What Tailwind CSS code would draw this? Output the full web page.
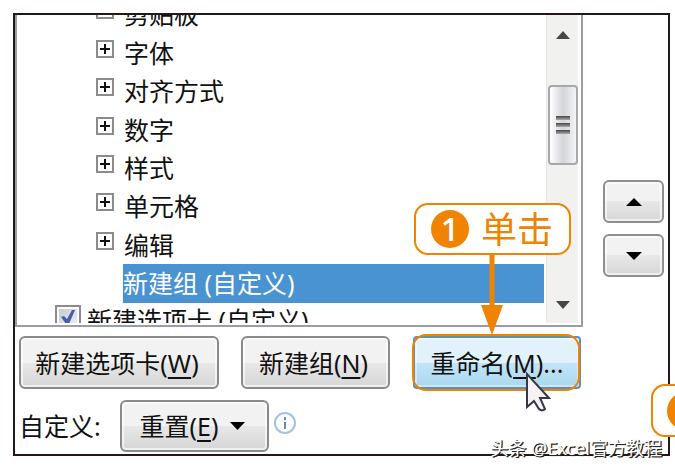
<!DOCTYPE html>
<html lang="zh-CN">
<head>
  <meta charset="UTF-8">
  <title>自定义功能区</title>
  <script src="https://cdn.jsdelivr.net/npm/@tailwindcss/browser@4"></script>
</head>
<body class="relative min-h-screen overflow-hidden bg-white pt-[13px] pl-[13px] pr-[5px] font-['Noto_Sans','Noto_Sans_CJK_SC',sans-serif] text-[25px] leading-8 text-[#111]">

  <main class="border-2 border-[#231815] pb-0.5">

    <div class="flex">
      <!-- Tree list -->
      <div class="flex h-[312px] flex-1 overflow-hidden border-r-2 border-b-2 border-l-2 border-[#9a9ca6]">
        <div class="mb-0.5 flex-1 overflow-hidden">
          <ul class="-mt-5 flex h-[346px] flex-col">
            <li class="flex flex-1 items-center pl-[79px]">
              <button aria-label="展开剪贴板" class="mr-[10px] mb-2 flex size-[18px] items-center justify-center border-2 border-[#8c8c8c]">
                <svg class="size-[10px]" viewBox="0 0 10 10"><path d="M0 5h10M5 0v10" stroke="#111" stroke-width="2"/></svg>
              </button>
              <span>剪贴板</span>
            </li>
            <li class="flex flex-1 items-center pl-[79px]">
              <button aria-label="展开字体" class="mr-[10px] mb-2 flex size-[18px] items-center justify-center border-2 border-[#8c8c8c]">
                <svg class="size-[10px]" viewBox="0 0 10 10"><path d="M0 5h10M5 0v10" stroke="#111" stroke-width="2"/></svg>
              </button>
              <span>字体</span>
            </li>
            <li class="flex flex-1 items-center pl-[79px]">
              <button aria-label="展开对齐方式" class="mr-[10px] mb-2 flex size-[18px] items-center justify-center border-2 border-[#8c8c8c]">
                <svg class="size-[10px]" viewBox="0 0 10 10"><path d="M0 5h10M5 0v10" stroke="#111" stroke-width="2"/></svg>
              </button>
              <span>对齐方式</span>
            </li>
            <li class="flex flex-1 items-center pl-[79px]">
              <button aria-label="展开数字" class="mr-[10px] mb-2 flex size-[18px] items-center justify-center border-2 border-[#8c8c8c]">
                <svg class="size-[10px]" viewBox="0 0 10 10"><path d="M0 5h10M5 0v10" stroke="#111" stroke-width="2"/></svg>
              </button>
              <span>数字</span>
            </li>
            <li class="flex flex-1 items-center pl-[79px]">
              <button aria-label="展开样式" class="mr-[10px] mb-2 flex size-[18px] items-center justify-center border-2 border-[#8c8c8c]">
                <svg class="size-[10px]" viewBox="0 0 10 10"><path d="M0 5h10M5 0v10" stroke="#111" stroke-width="2"/></svg>
              </button>
              <span>样式</span>
            </li>
            <li class="flex flex-1 items-center pl-[79px]">
              <button aria-label="展开单元格" class="mr-[10px] mb-2 flex size-[18px] items-center justify-center border-2 border-[#8c8c8c]">
                <svg class="size-[10px]" viewBox="0 0 10 10"><path d="M0 5h10M5 0v10" stroke="#111" stroke-width="2"/></svg>
              </button>
              <span>单元格</span>
            </li>
            <li class="flex flex-1 items-center pl-[79px]">
              <button aria-label="展开编辑" class="mr-[10px] mb-2 flex size-[18px] items-center justify-center border-2 border-[#8c8c8c]">
                <svg class="size-[10px]" viewBox="0 0 10 10"><path d="M0 5h10M5 0v10" stroke="#111" stroke-width="2"/></svg>
              </button>
              <span>编辑</span>
            </li>
            <li class="mr-0.5 ml-[106px] flex flex-1 items-center bg-[#4a93d2] text-white">新建组 (自定义)</li>
            <li class="flex flex-1 items-center pl-[38px]">
              <label class="flex items-center gap-[6px]">
                <span class="mb-2 grid size-[26px]">
                  <input type="checkbox" checked class="col-start-1 row-start-1 appearance-none border-2 border-[#8c8c8c] bg-gradient-to-br from-[#c3c8d0] to-[#f2f4f6] ring-2 ring-white ring-inset">
                  <svg class="pointer-events-none col-start-1 row-start-1 size-[26px]" viewBox="0 0 26 26"><path d="M6 12l3-1 3 3 5-9h3l-6 14h-3z" fill="#4a5fa8"/></svg>
                </span>
                <span class="pb-1">新建选项卡 (自定义)</span>
              </label>
            </li>
          </ul>
        </div>

        <!-- Scrollbar -->
        <div class="mr-[3px] mb-0.5 flex w-8 flex-col items-center border-l border-[#e6e6e6] bg-[#f1f1f0]">
          <button aria-label="向上滚动" class="flex h-[70px] w-full justify-center pt-4">
            <svg class="h-2 w-[14px]" viewBox="0 0 14 8"><path d="M0 8L7 0l7 8z" fill="#4a4545"/></svg>
          </button>
          <div class="flex h-[80px] w-[30px] flex-col items-center justify-center gap-[3px] rounded-sm border-2 border-[#a8a8a8] bg-gradient-to-r from-white via-[#d3d5da] to-[#f4f4f6]">
            <span class="h-1 w-[14px] bg-gradient-to-b from-[#4a4545] to-[#aaa]"></span>
            <span class="h-1 w-[14px] bg-gradient-to-b from-[#4a4545] to-[#aaa]"></span>
            <span class="h-1 w-[14px] bg-gradient-to-b from-[#4a4545] to-[#aaa]"></span>
          </div>
          <button aria-label="向下滚动" class="mt-auto flex w-full justify-center pb-[14px]">
            <svg class="h-2 w-[14px]" viewBox="0 0 14 8"><path d="M0 0h14L7 8z" fill="#4a4545"/></svg>
          </button>
        </div>
      </div>

      <!-- Move up / down -->
      <div class="flex w-[85px] flex-col items-end gap-[11px] pt-[165px] pr-1">
        <button aria-label="上移" class="flex h-[43px] w-[61px] items-center justify-center rounded-md border-2 border-[#8f8f8f] bg-gradient-to-b from-[#f2f2f2] from-50% via-[#e8e8e8] via-50% to-[#d6d6d6] ring-2 ring-white/60 ring-inset">
          <svg class="h-2 w-4" viewBox="0 0 16 8"><path d="M0 8L8 0l8 8z" fill="#000"/></svg>
        </button>
        <button aria-label="下移" class="flex h-[43px] w-[61px] items-center justify-center rounded-md border-2 border-[#8f8f8f] bg-gradient-to-b from-[#f2f2f2] from-50% via-[#e8e8e8] via-50% to-[#d6d6d6] ring-2 ring-white/60 ring-inset">
          <svg class="h-2 w-4" viewBox="0 0 16 8"><path d="M0 0h16L8 8z" fill="#000"/></svg>
        </button>
      </div>
    </div>

    <!-- Action buttons -->
    <div class="mt-[9px] flex pl-1">
      <button class="h-[53px] w-[200px] rounded-md border-2 border-[#8a8a8a] bg-gradient-to-b from-[#f2f2f2] from-50% via-[#e8e8e8] via-50% to-[#d6d6d6] pr-1 ring-2 ring-white/60 ring-inset">新建选项卡(<span class="underline decoration-2 underline-offset-4">W</span>)</button>
      <button class="ml-[22px] h-[53px] w-[149px] rounded-md border-2 border-[#8a8a8a] bg-gradient-to-b from-[#f2f2f2] from-50% via-[#e8e8e8] via-50% to-[#d6d6d6] pr-1 ring-2 ring-white/60 ring-inset">新建组(<span class="underline decoration-2 underline-offset-4">N</span>)</button>

      <div class="relative ml-[23px]">
        <button class="h-[53px] w-[168px] rounded-sm border-2 border-[#5b8fc4] bg-gradient-to-b from-[#e2f2fb] from-50% via-[#c3e4f6] via-50% to-[#a9d8f0] ring-2 ring-white/40 ring-inset">重命名(<span class="underline decoration-2 underline-offset-4">M</span>)...</button>
        <div class="pointer-events-none absolute -inset-y-0.5 right-px -left-px rounded-[14px] border-2 border-[#f08300]"></div>

        <!-- Step 1 callout and arrow -->
        <svg class="absolute bottom-full left-[68px] h-[82px] w-[22px]" viewBox="0 0 22 82"><path d="M8.500 0h5v51H22L11 81 0 51h8.500z" fill="#f08300"/></svg>
        <div class="absolute bottom-[134px] left-px flex h-[52px] w-[157px] items-center rounded-[14px] border-2 border-[#f08300] bg-white pl-[15px] text-[#f08300]">
          <span class="mr-3 flex size-[38px] items-center justify-center rounded-full bg-[#f08300] font-['Open_Sans',sans-serif] text-[32px] font-semibold text-white">1</span>
          <span class="pb-1 font-['Noto_Sans_CJK_SC',sans-serif] text-[36px] leading-none">单击</span>
        </div>

        <!-- Mouse pointer -->
        <svg class="absolute top-[36px] left-[112px] h-[42px] w-[28px]" viewBox="0 0 28 42"><path d="M2 2v33l7-6 5 8q3 3 6 0l-5-11h9z" fill="#f4f2f2" stroke="#3a3646" stroke-width="2"/></svg>
      </div>
    </div>

    <!-- Reset row -->
    <div class="mt-[11px] flex pl-1">
      <span class="w-[101px] pt-[10px]">自定义:</span>
      <button class="flex h-[52px] w-[149px] items-center justify-center gap-3 rounded-md border-2 border-[#8a8a8a] bg-gradient-to-b from-[#f2f2f2] from-50% via-[#e8e8e8] via-50% to-[#d6d6d6] pr-1 ring-2 ring-white/60 ring-inset">
        <span>重置(<span class="underline decoration-2 underline-offset-4">E</span>)</span>
        <svg class="h-2 w-[15px]" viewBox="0 0 15 8"><path d="M0 0h15L7.500 8z" fill="#000"/></svg>
      </button>
      <svg class="mt-[11px] ml-1 size-6" viewBox="0 0 24 24" role="img" aria-label="信息">
        <circle cx="12" cy="12" r="10" fill="#fff" stroke="#a5c1e4" stroke-width="2"/>
        <path d="M12 6v3M12 11v7" stroke="#6a88c0" stroke-width="2"/>
      </svg>
    </div>
  </main>

  <!-- Next step badge, runs off the right edge -->
  <div class="absolute top-[384px] right-0 flex h-[53px] w-6 items-center overflow-hidden rounded-l-[14px] border-2 border-r-0 border-[#f08300] bg-white pl-[14px]">
    <span class="h-[38px] w-[19px] shrink-0 rounded-l-full bg-[#f08300]"></span>
  </div>

  <!-- Watermark -->
  <p class="absolute right-[13px] bottom-[11px] text-[18px] leading-6 whitespace-nowrap text-white [text-shadow:1px_1px_0_#222,1px_1px_1px_#222]">头条 @Excel官方教程</p>

</body>
</html>
